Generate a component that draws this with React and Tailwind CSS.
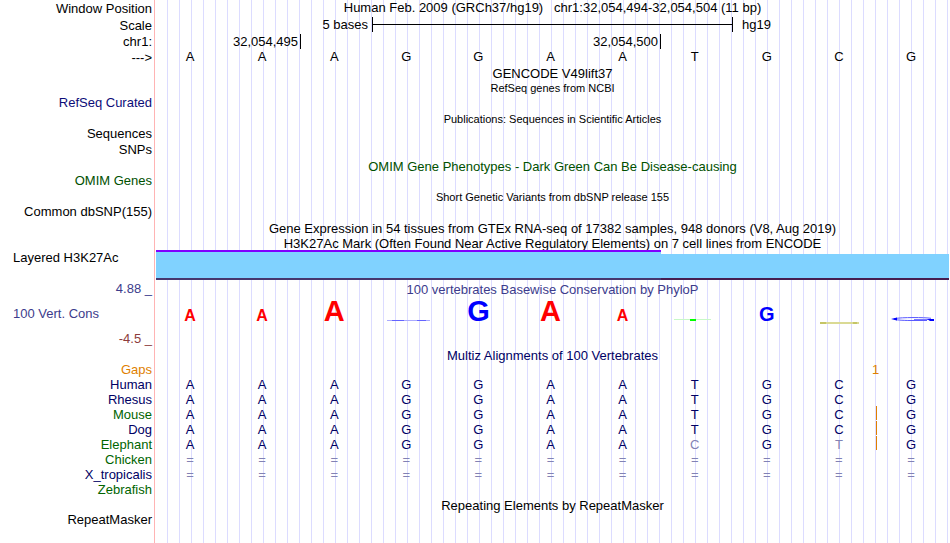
const labels = [
  { text: "Window Position", gap: "mt-px" },
  { text: "Scale", gap: "mt-[2px]" },
  { text: "chr1:", gap: "mt-px" },
  { text: "--->", gap: "mt-px" },
  { text: "RefSeq Curated", gap: "mt-[30px]", color: "text-[#0c0c78]" },
  { text: "Sequences", gap: "mt-4" },
  { text: "SNPs", gap: "mt-px" },
  { text: "OMIM Genes", gap: "mt-4", color: "text-[#005000]" },
  { text: "Common dbSNP(155)", gap: "mt-4" },
  { text: "Layered H3K27Ac", gap: "mt-[31px]", align: "pl-[13px] text-left" },
  { text: "4.88 _", gap: "mt-4", color: "text-[#3c3c8c]" },
  { text: "100 Vert. Cons", gap: "mt-[10px]", color: "text-[#3c3c8c]", align: "pl-[13px] text-left" },
  { text: "-4.5 _", gap: "mt-[10px]", color: "text-[#8c3c3c]" },
  { text: "Gaps", gap: "mt-4", color: "text-[#e08000]" },
  { text: "Human", color: "text-[#000064]" },
  { text: "Rhesus", color: "text-[#000064]" },
  { text: "Mouse", color: "text-[#006400]" },
  { text: "Dog", color: "text-[#000064]" },
  { text: "Elephant", color: "text-[#006400]" },
  { text: "Chicken", color: "text-[#006400]" },
  { text: "X_tropicalis", color: "text-[#000064]" },
  { text: "Zebrafish", color: "text-[#006400]" },
  { text: "RepeatMasker", gap: "mt-[15px]" },
];

const alignments = [
  { species: "Human", bases: "AAAGGAATGCG" },
  { species: "Rhesus", bases: "AAAGGAATGCG" },
  { species: "Mouse", bases: "AAAGGAATGCG", insert: true },
  { species: "Dog", bases: "AAAGGAATGCG", insert: true },
  { species: "Elephant", bases: "AAAGGAACGTG", insert: true, diff: [7, 9] },
  { species: "Chicken", bases: "===========" },
  { species: "X_tropicalis", bases: "===========" },
];

// letter height follows the PhyloP score
const scores = [
  { base: "A", style: "text-[16px] text-[#ff0000]" },
  { base: "A", style: "text-[16px] text-[#ff0000]" },
  { base: "A", style: "text-[29px] text-[#ff0000]" },
  { mark: "low" },
  { base: "G", style: "text-[29px] text-[#0000ff]" },
  { base: "A", style: "text-[29px] text-[#ff0000]" },
  { base: "A", style: "text-[16px] text-[#ff0000]" },
  { mark: "green" },
  { base: "G", style: "text-[20px] text-[#0000ff]" },
  { mark: "negative" },
  { mark: "blue" },
];

function Title({ children, gap = "", size = "text-[13px]", color = "" }) {
  return <h2 className={`text-center leading-[15px] whitespace-pre ${gap} ${size} ${color}`}>{children}</h2>;
}

function ScoreMark({ type }) {
  return (
    <svg width="44" height="8" viewBox="0 0 44 8" className="inline overflow-visible align-baseline">
      {type === "low" && (
        <>
          <path d="M3 7.5H46" stroke="#aaaaff" />
          <path d="M8 7.5H20M33 7.5H42" stroke="#6464ff" />
        </>
      )}
      {type === "green" && (
        <>
          <path d="M1 6.5H38" stroke="#c8f8c8" />
          <path d="M17 6H23V8H17Z" fill="#00ff00" />
        </>
      )}
      {type === "negative" && (
        <>
          <path d="M3 10H42" stroke="#dada94" strokeWidth="2" />
          <path d="M3 10H9M36 10H40" stroke="#b0b038" />
        </>
      )}
      {type === "blue" && (
        <>
          <path d="M42 5.3C36 4.3 12 4.2 6 5.6C2 6.6 12 7.5 22 7.5H38" fill="none" stroke="#5a5aff" />
          <path d="M2 6L8 4.6V7.6Z" fill="#0000ff" />
          <path d="M25 6.5H39" stroke="#7878ff" />
          <path d="M38 6H45V8H41Z" fill="#0000ff" />
        </>
      )}
    </svg>
  );
}

function Bases({ bases, insert, diff = [], color = "" }) {
  return (
    <div className={`-ml-[2px] mr-[2px] grid grid-cols-11 text-center leading-[15px] ${color}`}>
      {bases.split("").map((base, i) => (
        <span key={i} className={`relative ${base === "=" || diff.includes(i) ? "text-[#8282b4]" : ""}`}>
          {insert && i === 10 && <span className="absolute top-[-1px] left-px h-[14px] w-px bg-[#e08000]" />}
          {base}
        </span>
      ))}
    </div>
  );
}

export default function App() {
  return (
    <div className="flex min-h-screen bg-white font-['Liberation_Sans',Arial,sans-serif] text-[13px] text-black">
      <aside className="w-[154px] shrink-0 pr-[2px] text-right">
        {labels.map((label) => (
          <div
            key={label.text}
            className={`leading-[15px] whitespace-nowrap ${label.gap || ""} ${label.color || ""} ${label.align || ""}`}
          >
            {label.text}
          </div>
        ))}
      </aside>

      <main className="min-w-0 flex-1 border-l border-[#ffb4b4] bg-[repeating-linear-gradient(90deg,transparent_0_11px,#dcdcff_11px_12px)] bg-clip-content bg-origin-content pr-px pl-px">
        <h1 className="text-center leading-[15px] whitespace-pre">
          Human Feb. 2009 (GRCh37/hg19)   chr1:32,054,494-32,054,504 (11 bp)
        </h1>

        <div className="mt-[2px] mr-px grid h-[15px] grid-cols-11 leading-[15px]">
          <span className="col-span-3 pr-1 text-right">5 bases</span>
          <div className="col-span-5 flex items-center border-l border-black">
            <div className="h-px w-full bg-black" />
          </div>
          <span className="col-span-3 border-l border-black pl-[9px]">hg19</span>
        </div>

        <div className="mt-[2px] mr-px grid h-[15px] grid-cols-11 text-right leading-[15px]">
          <span className="col-span-2 pr-[2px]">32,054,495</span>
          <span className="col-span-5 border-l border-black pr-[2px]">32,054,500</span>
          <span className="col-span-4 border-l border-black" />
        </div>
        <Bases bases="AAAGGAATGCG" />

        <Title gap="mt-[2px]">GENCODE V49lift37</Title>
        <Title size="text-[11px]">RefSeq genes from NCBI</Title>
        <Title gap="mt-4" size="text-[11px]">Publications: Sequences in Scientific Articles</Title>
        <Title gap="mt-8" color="text-[#005000]">OMIM Gene Phenotypes - Dark Green Can Be Disease-causing</Title>
        <Title gap="mt-4" size="text-[11px]">Short Genetic Variants from dbSNP release 155</Title>
        <Title gap="mt-4">Gene Expression in 54 tissues from GTEx RNA-seq of 17382 samples, 948 donors (V8, Aug 2019)</Title>
        <Title>H3K27Ac Mark (Often Found Near Active Regulatory Elements) on 7 cell lines from ENCODE</Title>

        <div className="-mt-px grid h-[30px] grid-cols-11">
          <div className="col-span-7 border-t-2 border-b-2 border-t-[#8000ff] border-b-[#46376e] bg-[#80d2ff]" />
          <div className="col-span-4 mt-1 border-b-2 border-[#461e50] bg-[#80d2ff]" />
        </div>

        <Title gap="mt-[2px]" color="text-[#3c3c8c]">100 vertebrates Basewise Conservation by PhyloP</Title>
        <div className="-ml-[2px] mr-[2px] grid h-[51px] grid-cols-11 items-baseline text-center leading-none font-bold">
          {scores.map((score, i) => (
            <span key={i} className={score.style}>
              {score.base || <ScoreMark type={score.mark} />}
            </span>
          ))}
        </div>

        <Title color="text-[#000064]">Multiz Alignments of 100 Vertebrates</Title>
        <div className="-mt-px -ml-[2px] mr-[2px] grid grid-cols-11 leading-[15px] text-[#e08000]">
          <span className="col-start-11 -ml-[3px]">1</span>
        </div>
        {alignments.map((row) => (
          <Bases key={row.species} {...row} color="text-[#000064]" />
        ))}

        <Title gap="mt-4">Repeating Elements by RepeatMasker</Title>
      </main>
    </div>
  );
}
